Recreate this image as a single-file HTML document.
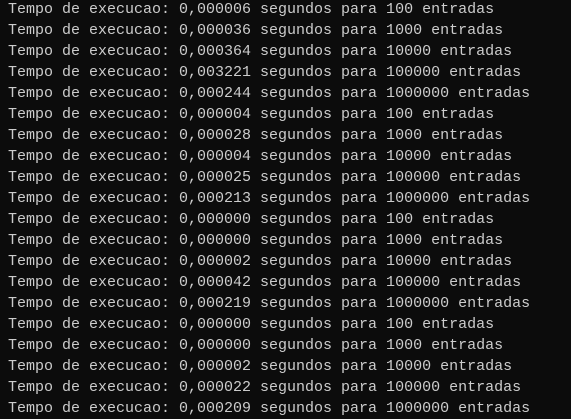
<!DOCTYPE html><html><head><style>
html,body{margin:0;background:#0c0c0c;width:571px;height:419px;overflow:hidden}
pre{margin:0;padding:0 0 0 8px;font-family:"Liberation Mono",monospace;font-size:15px;line-height:21px;color:#cccccc;position:relative;top:-1px}
</style></head><body><pre>Tempo de execucao: 0,000006 segundos para 100 entradas
Tempo de execucao: 0,000036 segundos para 1000 entradas
Tempo de execucao: 0,000364 segundos para 10000 entradas
Tempo de execucao: 0,003221 segundos para 100000 entradas
Tempo de execucao: 0,000244 segundos para 1000000 entradas
Tempo de execucao: 0,000004 segundos para 100 entradas
Tempo de execucao: 0,000028 segundos para 1000 entradas
Tempo de execucao: 0,000004 segundos para 10000 entradas
Tempo de execucao: 0,000025 segundos para 100000 entradas
Tempo de execucao: 0,000213 segundos para 1000000 entradas
Tempo de execucao: 0,000000 segundos para 100 entradas
Tempo de execucao: 0,000000 segundos para 1000 entradas
Tempo de execucao: 0,000002 segundos para 10000 entradas
Tempo de execucao: 0,000042 segundos para 100000 entradas
Tempo de execucao: 0,000219 segundos para 1000000 entradas
Tempo de execucao: 0,000000 segundos para 100 entradas
Tempo de execucao: 0,000000 segundos para 1000 entradas
Tempo de execucao: 0,000002 segundos para 10000 entradas
Tempo de execucao: 0,000022 segundos para 100000 entradas
Tempo de execucao: 0,000209 segundos para 1000000 entradas</pre></body></html>
